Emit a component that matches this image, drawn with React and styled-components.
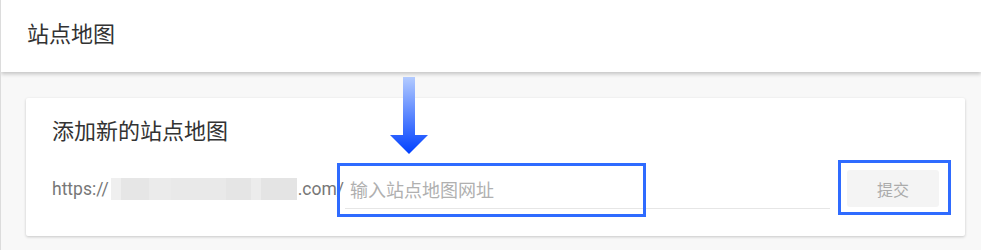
import React from "react"
import styled, { createGlobalStyle } from "styled-components"

const GlobalStyle = createGlobalStyle`
  html, body {
    margin: 0;
    padding: 0;
    background: #f8f8f8;
    font-family: Roboto, "Noto Sans CJK SC", sans-serif;
  }
`

const Page = styled.div`
  position: relative;
  min-height: 250px;
  border-left: 1px solid #dcdcdc;
  overflow: hidden;
`

const Header = styled.div`
  height: 72px;
  display: flex;
  align-items: center;
  padding-left: 26px;
  background: #fff;
  box-shadow: 0 2px 4px rgba(0, 0, 0, 0.22);
  position: relative;
  z-index: 1;
`

const HeaderTitle = styled.h1`
  margin: 0;
  font-size: 22px;
  font-weight: 400;
  color: #333;
  line-height: 1;
  padding-bottom: 2px;
`

const Card = styled.div`
  margin: 26px 16px 0 25px;
  padding: 21px 26px 29px;
  background: #fff;
  border-radius: 2px;
  box-shadow: 0 1px 3px rgba(0, 0, 0, 0.2);
`

const CardTitle = styled.h2`
  margin: 0;
  font-size: 22px;
  font-weight: 400;
  color: #333;
  line-height: 26px;
`

const Row = styled.div`
  display: flex;
  align-items: center;
  height: 37px;
  margin-top: 25px;
`

const Prefix = styled.span`
  display: flex;
  align-items: center;
  font-size: 17.5px;
  color: #777;
  white-space: nowrap;
`

const Blurred = styled.span`
  display: inline-block;
  width: 186px;
  height: 22px;
  margin: 0 1px 0 2px;
  background: linear-gradient(
    90deg,
    #efefef 0 10px,
    #e6e6e6 10px 38px,
    #ebebeb 38px 60px,
    #e9e9e9 60px 115px,
    #e5e5e5 115px 140px,
    #ececec 140px 150px,
    #e4e4e4 150px 186px
  );
`

const Field = styled.input`
  flex: 1;
  min-width: 0;
  height: 36px;
  margin-left: 1px;
  padding: 4px 5px 0;
  border: none;
  border-bottom: 1px solid #e6e6e6;
  background: transparent;
  font-family: inherit;
  font-size: 18px;
  color: #333;
  outline: none;
  &::placeholder {
    color: #b0b0b0;
  }
`

const Submit = styled.button`
  width: 92px;
  height: 37px;
  margin-left: 17px;
  border: none;
  border-radius: 3px;
  background: #f4f4f4;
  color: #ababab;
  font-family: inherit;
  font-size: 16px;
`

const Marker = styled.div`
  position: absolute;
  left: ${(p) => p.x}px;
  top: ${(p) => p.y}px;
  width: ${(p) => p.w}px;
  height: ${(p) => p.h}px;
  box-sizing: border-box;
  border: 3px solid #2f6bff;
  pointer-events: none;
  z-index: 2;
`

const Arrow = styled.svg`
  position: absolute;
  left: 389px;
  top: 77px;
  z-index: 2;
`

const App = () => {
  return (
    <>
      <GlobalStyle />
      <Page>
        <Header>
          <HeaderTitle>站点地图</HeaderTitle>
        </Header>
        <Card>
          <CardTitle>添加新的站点地图</CardTitle>
          <Row>
            <Prefix>
              https://
              <Blurred />
              .com/
            </Prefix>
            <Field placeholder="输入站点地图网址" />
            <Submit>提交</Submit>
          </Row>
        </Card>

        <Arrow width="38" height="77" viewBox="0 0 38 77">
          <defs>
            <linearGradient id="arrowFill" x1="0" y1="0" x2="0" y2="1">
              <stop offset="0" stopColor="#b3cbff" />
              <stop offset="1" stopColor="#0040ff" />
            </linearGradient>
          </defs>
          <path d="M13 0 H25 V58 H38 L19 77 L0 58 H13 Z" fill="url(#arrowFill)" />
        </Arrow>
        <Marker x={336} y={163} w={309} h={54} />
        <Marker x={837} y={160} w={113} h={55} />
      </Page>
    </>
  )
}

export default App
